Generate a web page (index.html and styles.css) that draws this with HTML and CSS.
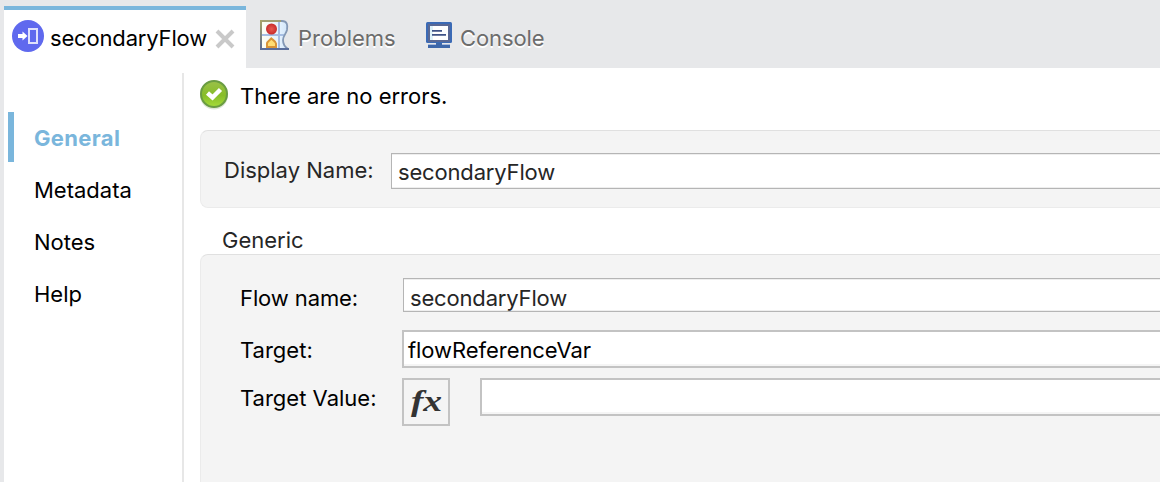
FILE: index.html
```html
<!DOCTYPE html>
<html lang="en">
<head>
<meta charset="utf-8">
<title>secondaryFlow</title>
<link rel="stylesheet" href="styles.css">
</head>
<body>
<div class="window">
  <header class="tabs">
    <div class="tab tab-active">
      <svg class="flow-icon" width="32" height="32" viewBox="0 0 32 32">
        <circle cx="16" cy="16" r="16" fill="#5f69ee"/>
        <path d="M6 14h4.500V11.500L15.500 16l-5 4.500V18H6z" fill="#fff"/>
        <rect x="17" y="9" width="8" height="14" fill="none" stroke="#dfe1fc" stroke-width="2"/>
      </svg>
      <span class="tab-title flow-text">secondaryFlow</span>
      <svg class="close" width="20" height="20" viewBox="0 0 20 20"><path d="M2 2L18 18M18 2L2 18" stroke="#c9c9c9" stroke-width="4"/></svg>
    </div>
    <div class="tab tab-problems">
      <svg width="30" height="32" viewBox="0 0 30 32">
        <defs>
          <linearGradient id="edge" x1="0" y1="0" x2="0" y2="1"><stop offset="0" stop-color="#aaa565"/><stop offset="1" stop-color="#596991"/></linearGradient>
          <linearGradient id="paper" x1="0" x2="1"><stop offset="0" stop-color="#fffef0"/><stop offset=".7" stop-color="#e4f1fd"/><stop offset="1" stop-color="#cfe4fa"/></linearGradient>
          <radialGradient id="red"><stop offset="0" stop-color="#e85a50"/><stop offset="1" stop-color="#c92b2a"/></radialGradient>
        </defs>
        <path d="M1 1H22C27 1 28 5 27 10C26 14 23 16 23 20C23 24 25 27 28 29H1z" fill="url(#paper)"/>
        <path d="M19 2v27M2 15h22" stroke="#a6bee3" stroke-width="2"/>
        <path d="M1 1H22C27 1 28 5 27 10C26 14 23 16 23 20C23 24 25 27 28 29" fill="none" stroke="#8498b5" stroke-width="1.800"/>
        <path d="M1 1H21" stroke="#a29f72" stroke-width="2"/>
        <rect width="2" height="30" fill="url(#edge)"/>
        <path d="M0 29H29" stroke="#596d9b" stroke-width="2"/>
        <circle cx="11.500" cy="9" r="5.500" fill="url(#red)"/>
        <path d="M7 27V23.500C7 21.500 10 20 11.300 18.500C12.800 20 16 21.500 16 23.500V27z" fill="#ffdd74" stroke="#d99438" stroke-width="2"/>
      </svg>
      <span class="tab-title">Problems</span>
    </div>
    <div class="tab tab-console">
      <svg width="26" height="26" viewBox="0 0 26 26">
        <rect width="26" height="21" rx="1.500" fill="#3b6ab5"/>
        <rect x="2" y="2" width="22" height="18" fill="#596894"/>
        <rect x="4" y="4" width="18" height="14" fill="#fff"/>
        <path d="M4 4h3v14H4z" fill="#dff3fb"/>
        <path d="M6 8.800h10M6 12.800h14" stroke="#3f5387" stroke-width="1.800"/>
        <path d="M10 21h6v2h8v3H2v-3h8z" fill="#3d67aa"/>
        <path d="M2 22.500h8M16 22.500h8" stroke="#a9badb" stroke-width="1"/>
      </svg>
      <span class="tab-title">Console</span>
    </div>
  </header>
  <div class="workspace">
    <nav class="nav">
      <a class="nav-item nav-current">General</a>
      <a class="nav-item">Metadata</a>
      <a class="nav-item">Notes</a>
      <a class="nav-item">Help</a>
    </nav>
    <main class="editor">
      <div class="status">
        <svg width="30" height="30" viewBox="0 0 30 30">
          <defs><linearGradient id="green" x1="0" y1="0" x2="0" y2="1"><stop offset="0" stop-color="#9bc14a"/><stop offset=".55" stop-color="#87bd28"/><stop offset="1" stop-color="#a6dc3b"/></linearGradient></defs>
          <circle cx="14" cy="15.500" r="14" fill="#dfe6d8"/>
          <circle cx="14" cy="14" r="13" fill="url(#green)" stroke="#6a9c42" stroke-width="2"/>
          <path d="M7.500 13L12.500 17.500L20.500 9.500" fill="none" stroke="#fff" stroke-width="4.500"/>
        </svg>
        <span class="errors">There are no errors.</span>
      </div>
      <section class="panel display-panel">
        <label class="display-label">Display Name:</label>
        <div class="field display-field flow-text">secondaryFlow</div>
      </section>
      <h2 class="section-title">Generic</h2>
      <section class="panel generic-panel">
        <div class="row flow-row">
          <label class="flow-label">Flow name:</label>
          <div class="field flow-field flow-text">secondaryFlow</div>
        </div>
        <div class="row target-row">
          <label class="target-label">Target:</label>
          <div class="field heavy-field">flowReferenceVar</div>
        </div>
        <div class="row value-row">
          <label class="value-label">Target Value:</label>
          <div class="fx"><span class="fx-text">fx</span></div>
          <div class="field heavy-field"></div>
        </div>
      </section>
    </main>
  </div>
</div>
</body>
</html>
```
FILE: styles.css
```css
* { box-sizing: border-box; }
body { margin: 0; overflow: hidden; font: 22px/28px Inter, "Liberation Sans", sans-serif; color: #000; background: #fff; }
svg { display: block; flex: none; }
.window { height: 482px; display: flex; flex-direction: column; border-left: 4px solid #e7e8ea; white-space: nowrap; }
.flow-text { letter-spacing: -0.17px; }
.tabs { height: 68px; flex: none; display: flex; background: #e7e8ea; padding-top: 6px; }
.tab { display: flex; align-items: flex-start; padding-top: 18px; color: #6c6c6c; text-shadow: 0 2px 0 #fff; }
.tab-active { width: 242px; padding: 10px 0 0 8px; background: #fff; border-top: 4px solid #7ab6dc; color: #000; text-shadow: none; }
.tab-active .tab-title { margin: 4px 0 0 6px; width: 158px; }
.close { margin: 9px 0 0 7px; }
.tab-problems { padding-left: 14px; width: 176px; }
.tab-problems svg { margin-top: -4px; }
.tab-problems .tab-title { margin-left: 8px; }
.tab-console { padding-left: 4px; letter-spacing: -0.1px; }
.tab-console svg { margin-top: -2px; }
.tab-console .tab-title { margin-left: 8px; }
.workspace { flex: 1; display: flex; min-height: 0; }
.nav { width: 180px; flex: none; border-right: 2px solid #e7e7e7; margin-top: 5px; padding-top: 39px; }
.nav-item { display: block; height: 52px; line-height: 52px; padding-left: 30px; }
.nav-current { height: 50px; line-height: 52px; border-left: 6px solid #7ab6dc; margin-left: 4px; padding-left: 20px; color: #7ab6dc; font-weight: 700; letter-spacing: 0.35px; margin-bottom: 2px; }
.editor { flex: 1; min-width: 0; padding-left: 16px; }
.status { height: 62px; display: flex; padding-top: 12px; }
.errors { margin: 2px 0 0 10px; }
.panel { background: #f4f4f4; border: 1px solid #ebebeb; border-top-color: #e0e0e0; border-right: 0; border-radius: 8px 0 0 8px; }
.display-panel { height: 78px; display: flex; padding: 22px 0 0 23px; color: #262626; }
.display-label { width: 167px; margin-top: 3px; }
.field { flex: 1; background: #fff; border: 1px solid #b5b5b5; border-right: 0; box-shadow: inset 0 2px 0 -1px #eee, inset 0 -1px 0 #eee; color: #262626; }
.display-field { height: 36px; line-height: 37px; padding-left: 6px; }
.section-title { font: inherit; color: #262626; margin: 0; height: 46px; padding: 18px 0 0 22px; }
.generic-panel { height: 240px; padding: 23px 0 0 39px; }
.row { display: flex; }
.row label { width: 162px; flex: none; }
.flow-row { height: 52px; }
.flow-label { margin-top: 6px; letter-spacing: -0.1px; }
.flow-field { height: 34px; line-height: 39px; padding-left: 6px; margin-left: 1px; }
.target-row { height: 48px; }
.target-label { margin-top: 6px; }
.heavy-field { height: 38px; line-height: 36px; padding-left: 4px; border: 2px solid #c3c3c3; border-right: 0; box-shadow: inset 0 -2px 0 #f5f5f5; color: #000; letter-spacing: -0.06px; }
.value-label { margin-top: 6px; }
.fx { width: 48px; height: 48px; border: 2px solid #c3c3c3; margin-right: 30px; display: flex; justify-content: center; }
.fx-text { font: italic 700 30px/41px "Liberation Serif", serif; color: #333; transform: scaleX(1.25); }
```
